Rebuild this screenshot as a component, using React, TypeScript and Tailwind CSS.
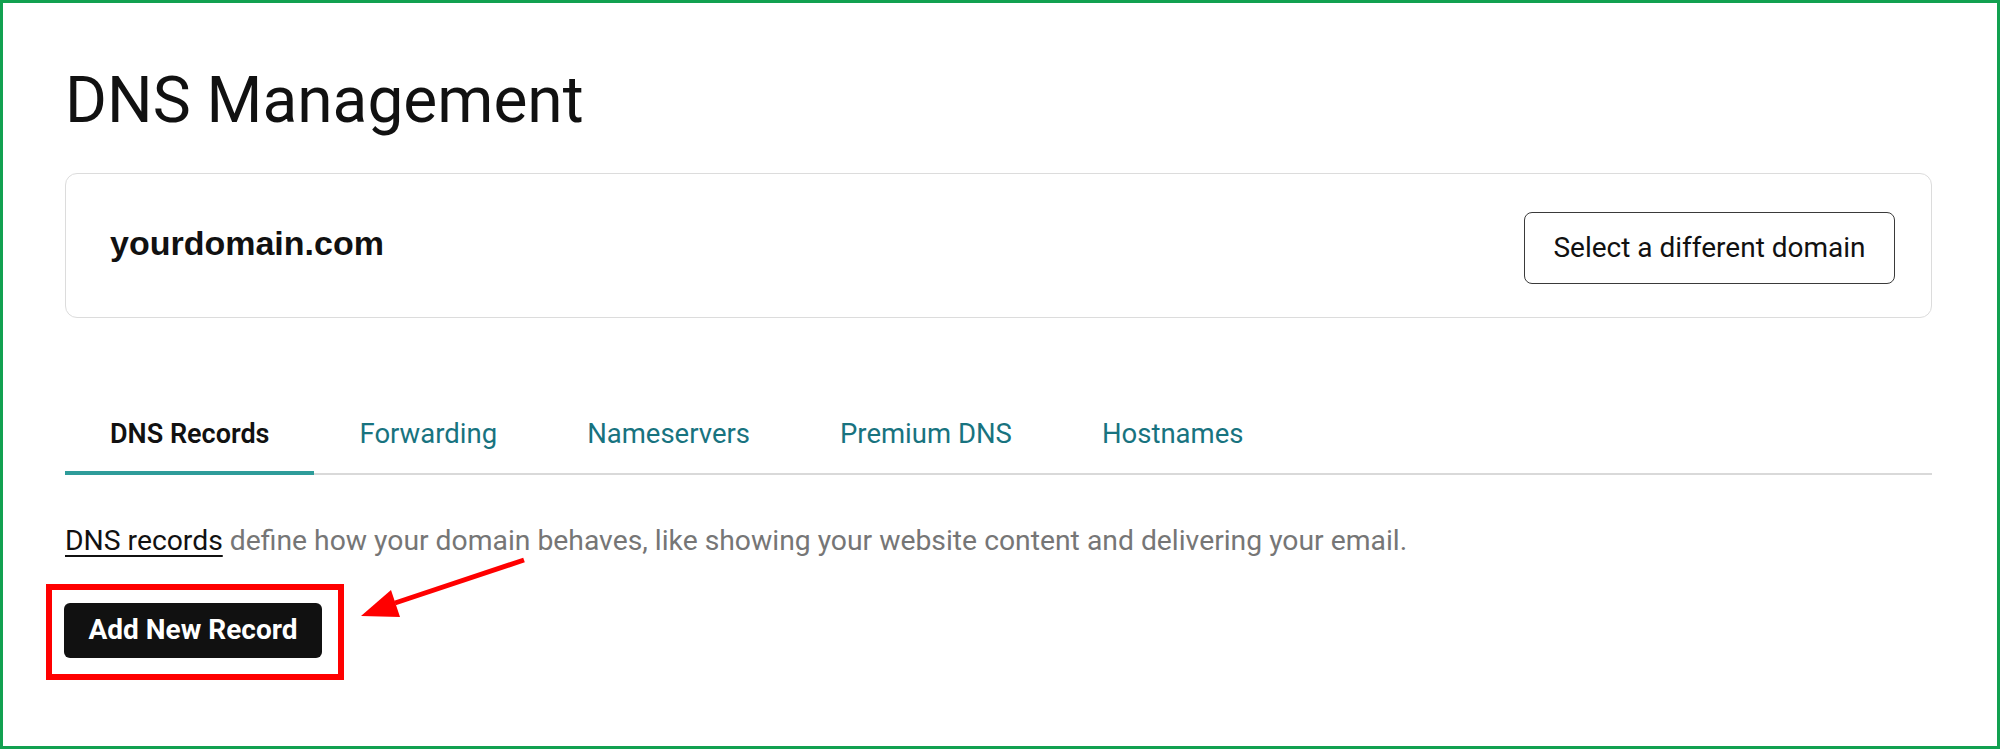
const tabs = ["DNS Records", "Forwarding", "Nameservers", "Premium DNS", "Hostnames"];

function Arrow() {
  // red annotation arrow pointing at the button
  return (
    <svg
      className="pointer-events-none absolute left-0 top-0"
      width="2000"
      height="749"
      viewBox="0 0 2000 749"
    >
      <line x1="521" y1="557" x2="392" y2="600" stroke="#ff0000" strokeWidth="5" />
      <polygon points="358,613 388,587 397,614" fill="#ff0000" />
    </svg>
  );
}

export default function App() {
  return (
    <div
      className="relative h-[749px] w-full border-[3px] border-[#12a150] bg-white pl-[62px] pr-[65px] pt-[66px] text-[#111]"
      style={{ fontFamily: "Roboto, 'Liberation Sans', sans-serif" }}
    >
      <h1 className="text-[64px] leading-none font-normal">DNS Management</h1>

      {/* Domain card */}
      <div className="mt-[40px] flex h-[145px] items-center justify-between rounded-[12px] border border-[#dcdcdc] pl-[44px] pr-[36px]">
        <div
          className="mb-[5px] text-[34px] font-bold leading-none"
          style={{ fontFamily: "'Liberation Sans', Arial, sans-serif" }}
        >
          yourdomain.com
        </div>
        <button className="mt-[4px] h-[72px] w-[371px] rounded-[8px] border border-[#3a3a3a] text-[28px] leading-none text-[#111]">
          Select a different domain
        </button>
      </div>

      {/* Tabs */}
      <div className="mt-[102px] flex items-end border-b-2 border-[#d9d9d9]">
        {tabs.map((t, i) => (
          <div
            key={t}
            className={
              i === 0
                ? "-mb-[2px] border-b-4 border-[#2e9c9a] px-[45px] pb-[23px] text-[27px] font-semibold leading-none text-[#111]"
                : "-mb-[2px] border-b-4 border-transparent px-[45px] pb-[23px] text-[27.5px] leading-none text-[#18737f]"
            }
          >
            {t}
          </div>
        ))}
      </div>

      <p className="mt-[52px] text-[28.3px] leading-none text-[#767676]">
        <span className="text-[#111] underline decoration-[1.5px] underline-offset-[5px]">DNS records</span>{" "}
        define how your domain behaves, like showing your website content and delivering your email.
      </p>

      {/* Highlighted button */}
      <div className="-ml-[19px] mt-[29px] inline-block border-[6px] border-[#ff0000] pb-[16px] pl-[12px] pr-[16px] pt-[13px]">
        <button className="flex h-[55px] w-[258px] items-center justify-center rounded-[6px] bg-[#111] text-[28px] font-bold leading-none text-white">
          Add New Record
        </button>
      </div>

      <Arrow />
    </div>
  );
}
